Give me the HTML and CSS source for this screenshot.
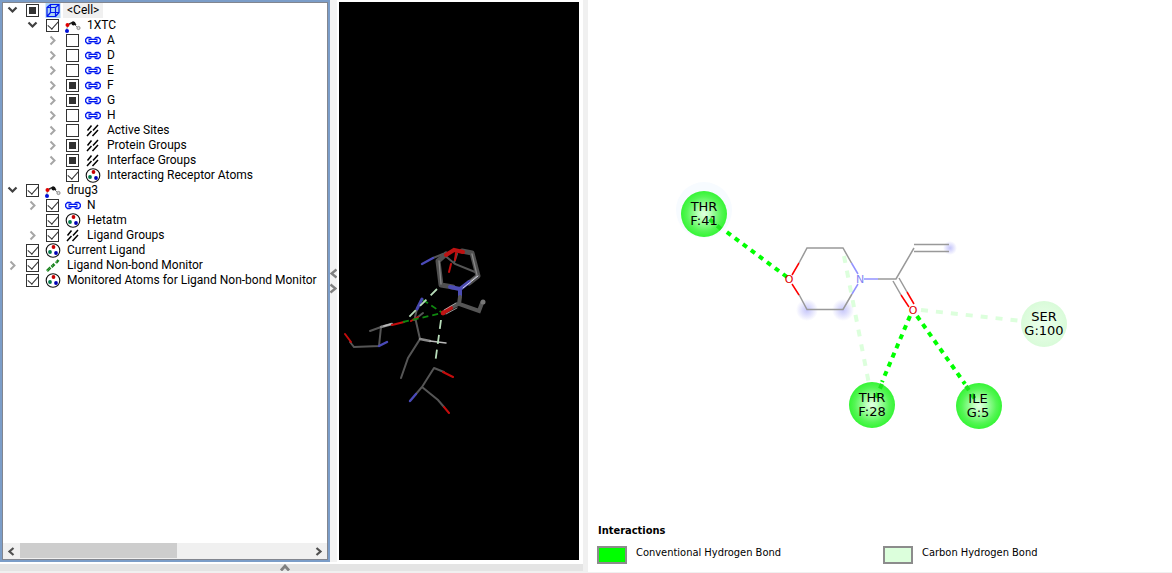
FILE: index.html
```html
<!DOCTYPE html>
<html lang="en">
<head>
<meta charset="utf-8">
<title>Ligand Interactions</title>
<link rel="stylesheet" href="styles.css">
</head>
<body>
<svg class="defs" aria-hidden="true">
  <symbol id="open" viewBox="0 0 15 15"><path d="M3.500 4.500l4 4 4-4" fill="none" stroke="#404040" stroke-width="2.200"/></symbol>
  <symbol id="closed" viewBox="0 0 15 15"><path d="M5.500 3.500l4 4-4 4" fill="none" stroke="#a6a6a6" stroke-width="2"/></symbol>
  <symbol id="cell" viewBox="0 0 15 15"><rect width="15" height="15" fill="#add3f3"/><path d="M1.500 4.500h8.500v9h-8.500zM5 1.500h8.500v8h-8.500zM1.500 4.500l3.500-3M10 4.500l3.500-3M10 13.500l3.500-4M1.500 13.500l3.500-4" fill="none" stroke="#0018f0" stroke-width="1.200"/></symbol>
  <symbol id="molecule" viewBox="0 0 16 15"><path d="M1.500 12l1.500-5 5-2 5 5" fill="none" stroke="#888" stroke-width="1"/><path d="M4 6l4-2 3 3" fill="none" stroke="#222" stroke-width="1.300"/><circle cx="2.500" cy="7" r="2" fill="#e00000"/><circle cx="8.500" cy="5.500" r="2" fill="#111"/><circle cx="2" cy="13" r="2" fill="#0010d8"/><circle cx="13.500" cy="10" r="1.600" fill="#ddd" stroke="#777" stroke-width=".8"/></symbol>
  <symbol id="chain" viewBox="0 0 16 15"><path d="M6.500 5.500L5 4.500H2.500L.700 6.300v2.400l1.800 1.800H5l1.500-1M9.500 5.500l1.500-1h2.500l1.800 1.800v2.400l-1.800 1.800H11l-1.500-1" fill="none" stroke="#0018f0" stroke-width="1.300"/><path d="M3.500 7.500h9" stroke="#0018f0" stroke-width="3.600"/><path d="M4.500 7.500h7" stroke="#fff" stroke-width="1"/></symbol>
  <symbol id="group" viewBox="0 0 15 15"><path d="M2 7.500l4-5M7.500 7.500l5-5.500M1.500 13l4.500-5M7 13l5.500-6" stroke="#000" stroke-width="1.500"/></symbol>
  <symbol id="atoms" viewBox="0 0 15 15"><circle cx="7.500" cy="7.500" r="6.800" fill="#fff" stroke="#111" stroke-width="1.100"/><circle cx="8" cy="4" r="1.900" fill="#c80000"/><circle cx="4.500" cy="9" r="1.900" fill="#007848"/><circle cx="10.500" cy="10" r="1.900" fill="#0000b8"/></symbol>
  <symbol id="monitor" viewBox="0 0 15 15"><path d="M1.500 13l3.500-3.500M6 9l3-3M10.500 5l2.500-3" stroke="#16801a" stroke-width="2.600"/><path d="M2 12.500l11-10.500" stroke="#e8ffe8" stroke-width=".7" stroke-dasharray="1 2"/></symbol>
  <symbol id="tick" viewBox="0 0 13 13"><path d="M2.500 6.500l3 3 5.500-6" fill="none" stroke="#333" stroke-width="1.300"/></symbol>
</svg>
<main class="workspace">
  <div class="left">
    <div class="views">
      <section class="browser" aria-label="Hierarchy">
        <ul class="tree">
          <li class="row"><button class="toggle" aria-label="Collapse Cell"><svg><use href="#open"/></svg></button><input type="checkbox" class="mixed" id="n0"><svg class="icon"><use href="#cell"/></svg><label class="selected" for="n0">&lt;Cell&gt;</label></li>
          <li class="row l1"><button class="toggle" aria-label="Collapse 1XTC"><svg><use href="#open"/></svg></button><input type="checkbox" checked id="n1"><svg class="icon"><use href="#molecule"/></svg><label for="n1">1XTC</label></li>
          <li class="row l2"><button class="toggle" aria-label="Expand A"><svg><use href="#closed"/></svg></button><input type="checkbox" id="n2"><svg class="icon"><use href="#chain"/></svg><label for="n2">A</label></li>
          <li class="row l2"><button class="toggle" aria-label="Expand D"><svg><use href="#closed"/></svg></button><input type="checkbox" id="n3"><svg class="icon"><use href="#chain"/></svg><label for="n3">D</label></li>
          <li class="row l2"><button class="toggle" aria-label="Expand E"><svg><use href="#closed"/></svg></button><input type="checkbox" id="n4"><svg class="icon"><use href="#chain"/></svg><label for="n4">E</label></li>
          <li class="row l2"><button class="toggle" aria-label="Expand F"><svg><use href="#closed"/></svg></button><input type="checkbox" class="mixed" id="n5"><svg class="icon"><use href="#chain"/></svg><label for="n5">F</label></li>
          <li class="row l2"><button class="toggle" aria-label="Expand G"><svg><use href="#closed"/></svg></button><input type="checkbox" class="mixed" id="n6"><svg class="icon"><use href="#chain"/></svg><label for="n6">G</label></li>
          <li class="row l2"><button class="toggle" aria-label="Expand H"><svg><use href="#closed"/></svg></button><input type="checkbox" id="n7"><svg class="icon"><use href="#chain"/></svg><label for="n7">H</label></li>
          <li class="row l2"><button class="toggle" aria-label="Expand Active Sites"><svg><use href="#closed"/></svg></button><input type="checkbox" id="n8"><svg class="icon"><use href="#group"/></svg><label for="n8">Active Sites</label></li>
          <li class="row l2"><button class="toggle" aria-label="Expand Protein Groups"><svg><use href="#closed"/></svg></button><input type="checkbox" class="mixed" id="n9"><svg class="icon"><use href="#group"/></svg><label for="n9">Protein Groups</label></li>
          <li class="row l2"><button class="toggle" aria-label="Expand Interface Groups"><svg><use href="#closed"/></svg></button><input type="checkbox" class="mixed" id="n10"><svg class="icon"><use href="#group"/></svg><label for="n10">Interface Groups</label></li>
          <li class="row l2"><span class="toggle"></span><input type="checkbox" checked id="n11"><svg class="icon"><use href="#atoms"/></svg><label for="n11">Interacting Receptor Atoms</label></li>
          <li class="row"><button class="toggle" aria-label="Collapse drug3"><svg><use href="#open"/></svg></button><input type="checkbox" checked id="n12"><svg class="icon"><use href="#molecule"/></svg><label for="n12">drug3</label></li>
          <li class="row l1"><button class="toggle" aria-label="Expand N"><svg><use href="#closed"/></svg></button><input type="checkbox" checked id="n13"><svg class="icon"><use href="#chain"/></svg><label for="n13">N</label></li>
          <li class="row l1"><span class="toggle"></span><input type="checkbox" checked id="n14"><svg class="icon"><use href="#atoms"/></svg><label for="n14">Hetatm</label></li>
          <li class="row l1"><button class="toggle" aria-label="Expand Ligand Groups"><svg><use href="#closed"/></svg></button><input type="checkbox" checked id="n15"><svg class="icon"><use href="#group"/></svg><label for="n15">Ligand Groups</label></li>
          <li class="row"><span class="toggle"></span><input type="checkbox" checked id="n16"><svg class="icon"><use href="#atoms"/></svg><label for="n16">Current Ligand</label></li>
          <li class="row"><button class="toggle" aria-label="Expand Ligand Non-bond Monitor"><svg><use href="#closed"/></svg></button><input type="checkbox" checked id="n17"><svg class="icon"><use href="#monitor"/></svg><label for="n17">Ligand Non-bond Monitor</label></li>
          <li class="row"><span class="toggle"></span><input type="checkbox" checked id="n18"><svg class="icon"><use href="#atoms"/></svg><label for="n18">Monitored Atoms for Ligand Non-bond Monitor</label></li>
        </ul>
        <div class="scrollbar">
          <button aria-label="Scroll left"><svg viewBox="0 0 17 15"><path d="M10.500 4L6.500 7.500l4 3.500" fill="none" stroke="#505050" stroke-width="2.200"/></svg></button>
          <div class="track"><div class="thumb"></div></div>
          <button aria-label="Scroll right"><svg viewBox="0 0 17 15"><path d="M6.500 4l4 3.500-4 3.500" fill="none" stroke="#505050" stroke-width="2.200"/></svg></button>
        </div>
      </section>
      <div class="splitter">
        <button aria-label="Collapse left"><svg viewBox="0 0 7 15"><path d="M6.500 3.500L1.500 7.500l5 4" fill="none" stroke="#808080" stroke-width="2.400"/></svg></button>
        <button aria-label="Expand right"><svg viewBox="0 0 7 15"><path d="M.5 3.500l5 4-5 4" fill="none" stroke="#808080" stroke-width="2.400"/></svg></button>
      </div>
      <section class="viewer" aria-label="3D view">
        <svg viewBox="339 2 240 558" preserveAspectRatio="xMidYMid meet" fill="none" stroke-linecap="round">
          <g stroke="#555" stroke-width="2">
            <path d="M433 258l10-4 12 10 20 8M457 254l-3 9"/>
            <path d="M417 309l-2 8 5 22-12 19-7 20"/>
            <path d="M370 331l11-4-2 19-25 1-4-5M434 368l-12 19-6 7M422 387l16 13 6 7M434 368l10 4"/>
            <path d="M414 320l9-7"/>
          </g>
          <path d="M420 339l10 2M381 327l11-3" stroke="#888" stroke-width="2.400"/>
          <path d="M430 341l16 2M384 326l7-2" stroke="#bbb" stroke-width="1.500"/>
          <path d="M422 264l11-6M416 394l-6 7M379 346l8-4" stroke="#4a4ab8" stroke-width="2.400"/>
          <path d="M422 299l-5 10" stroke="#4848b0" stroke-width="3"/>
          <path d="M456 253l-1 7M451 264l-2 8M411 321l7-4M392 325l12-3M345 334l6 8M443 372l10 5M444 407l5 6" stroke="#c40c0c" stroke-width="2"/>
          <path d="M446 254l-8 7 3 24 12 2M462 251l10 2 6 23-9 7" stroke="#505050" stroke-width="5" stroke-linejoin="round"/>
          <path d="M439 261l2 23M472 254l5 21M477 276l-8 6" stroke="#888" stroke-width="1.300"/>
          <path d="M446 255l8-5 9 2" stroke="#bc1212" stroke-width="4"/>
          <path d="M450 287l10 2 9-7M460 289v7" stroke="#4c4cb4" stroke-width="4"/>
          <path d="M463 288l15-12" stroke="#d8d8e8" stroke-width="1"/>
          <path d="M460 297l-1 7 20 7 3-8M458 304l-7 4" stroke="#555" stroke-width="4"/>
          <path d="M451 308l-8 5" stroke="#bc1212" stroke-width="4"/><path d="M444 310l12-7M446 314l11-6" stroke="#bbb" stroke-width=".8"/>
          <circle cx="483" cy="302" r="2.500" fill="#777"/><circle cx="443" cy="313" r="2.400" fill="#c01414"/>
          <g stroke="#0f880f" stroke-width="1.800" stroke-dasharray="6 4" stroke-linecap="butt"><path d="M423 300l18 12M403 322l39-9"/></g>
          <path d="M437 289l-31 31M441 320l-6 44" stroke="#b7dcb9" stroke-width="1.800" stroke-dasharray="9 6" stroke-linecap="butt"/>
        </svg>
      </section>
    </div>
    <div class="drawer"><button aria-label="Open panel"><svg viewBox="0 0 12 7"><path d="M2 6.500l4-4.500 4 4.500" fill="none" stroke="#808080" stroke-width="2.800"/></svg></button></div>
  </div>
  <section class="right" aria-label="2D diagram">
    <svg class="diagram" viewBox="588 0 584 520" preserveAspectRatio="xMidYMid meet">
      <defs>
        <radialGradient id="green"><stop offset="0" stop-color="#e2ffe2"/><stop offset=".2" stop-color="#c4ffc4"/><stop offset=".75" stop-color="#55f655"/><stop offset="1" stop-color="#35f535"/></radialGradient>
        <radialGradient id="pale"><stop offset="0" stop-color="#ecffec"/><stop offset="1" stop-color="#d9fbd9"/></radialGradient>
        <radialGradient id="glow"><stop offset="0" stop-color="#c6c6fa"/><stop offset=".4" stop-color="#dcdcfc"/><stop offset="1" stop-color="#fff"/></radialGradient>
      </defs>
      <circle cx="704" cy="210" r="28" fill="#f7fbff"/>
      <g fill="url(#glow)"><circle cx="807" cy="310" r="11"/><circle cx="843" cy="310" r="11"/><circle cx="950" cy="248" r="7"/></g>
      <g fill="url(#green)"><circle cx="704" cy="214" r="23"/><circle cx="872" cy="405" r="23"/><circle cx="979" cy="406" r="23"/></g>
      <circle cx="1044" cy="324" r="23" fill="url(#pale)"/>
      <g stroke="#dcffdc" stroke-width="4" stroke-dasharray="7 8"><path d="M844 256L869 384"/><path d="M921 310L1022 321"/></g>
      <g stroke="#0f0" stroke-width="4" stroke-dasharray="5 5"><path d="M787 277L724 230"/><path d="M910 316L882 382"/><path d="M917 316L965 384"/></g>
      <g stroke="#1de61d" stroke-width="4" stroke-dasharray="5 5"><path d="M721 229L707 217M882 384L874 402M966 386L977 402"/></g>
      <g fill="none" stroke="#999" stroke-width="1.500">
        <path d="M799 263l8-15h36l8.500 15M852 294l-9 15.500h-36l-8-15"/>
        <path d="M878 279h18l18-31M914 244.500h35M914 251.500h35M893 281l8 14M899 278l8 14"/>
      </g>
      <path d="M799 263l-7 12M792 284l7 11M901 295l8 12M907 292l7 12" stroke="#f00" stroke-width="1.500"/>
      <path d="M851.500 263l6.500 11M852 294l6-10M864 279h14" stroke="#9292ff" stroke-width="1.500"/>
      <g class="element"><text x="789" y="283" fill="#e00000">O</text><text x="913" y="314" fill="#e00000">O</text><text x="860" y="283" fill="#8585f2">N</text></g>
      <g class="residue">
        <text x="704" y="211">THR</text><text x="704" y="225">F:41</text>
        <text x="1044" y="321">SER</text><text x="1044" y="335">G:100</text>
        <text x="872" y="402">THR</text><text x="872" y="416">F:28</text>
        <text x="978" y="403">ILE</text><text x="978" y="417">G:5</text>
      </g>
    </svg>
    <div class="legend">
      <h2>Interactions</h2>
      <ul>
        <li><span class="swatch conventional"></span>Conventional Hydrogen Bond</li>
        <li><span class="swatch carbon"></span>Carbon Hydrogen Bond</li>
      </ul>
    </div>
  </section>
</main>
</body>
</html>
```
FILE: styles.css
```css
* { box-sizing: border-box; }
body { margin: 0; font-family: Roboto, "Open Sans", sans-serif; font-size: 12px; color: #000; background: #fff; }
button { border: 0; padding: 0; background: none; display: flex; align-items: center; justify-content: center; }
ul { list-style: none; margin: 0; padding: 0; }
svg { display: block; }
.defs { position: absolute; width: 0; height: 0; }
.workspace { display: flex; height: 100vh; }
.left { flex: 583 1 0; min-width: 0; display: flex; flex-direction: column; }
.views { flex: 1; min-height: 0; display: flex; margin-bottom: 2px; }
.browser { flex: 326 1 0; min-width: 0; display: flex; flex-direction: column; border: 2px solid #7b9dc8; }
.tree { flex: 1; min-height: 0; overflow: hidden; border: 1px solid #82868f; border-bottom: 0; padding-left: 2px; }
.row { display: flex; align-items: center; height: 15px; white-space: nowrap; }
.l1 { padding-left: 20px; }
.l2 { padding-left: 40px; }
.toggle { flex: none; width: 15px; height: 15px; margin-right: 6px; }
.toggle svg { width: 15px; height: 15px; }
.row input { appearance: none; flex: none; width: 13px; height: 13px; margin: 0 6px 0 0; border: 1px solid #333; background: #fff; display: grid; place-items: center; }
.row input:checked::after { content: ""; width: 9px; height: 5px; border: solid #333; border-width: 0 0 1px 1px; transform: translateY(-2px) rotate(-48deg); }
.row input.mixed::after { content: ""; width: 7px; height: 7px; background: #333; }
.icon { flex: none; width: 16px; height: 15px; margin-right: 6px; }
.row label { line-height: 15px; }
.row .selected { background: #f0f0f0; margin-left: -4px; padding: 0 4px; }
.scrollbar { flex: none; display: flex; height: 17px; background: #f0f0f0; border: 1px solid #82868f; border-top: 0; }
.scrollbar button { width: 17px; height: 16px; }
.scrollbar svg { width: 17px; height: 15px; }
.track { flex: 1; }
.thumb { width: 54%; height: 15px; background: #cdcdcd; }
.splitter { flex: none; width: 7px; margin-right: 2px; background: #f3f3f3; display: flex; flex-direction: column; justify-content: center; }
.splitter svg { width: 7px; height: 15px; }
.viewer { flex: 240 1 0; min-width: 0; margin: 2px 4px 2px 0; background: #000; }
.viewer svg { width: 100%; height: 100%; }
.drawer { flex: none; height: 9px; background: #e4e4e4; border-bottom: 2px solid #f0f0f0; display: flex; justify-content: center; }
.drawer svg { width: 12px; height: 7px; }
.drawer button { margin-right: 14px; }
.right { flex: 584 1 0; min-width: 0; display: flex; flex-direction: column; border-left: 5px solid #f0f0f0; border-bottom: 1px solid #f0f0f0; }
.diagram { flex: 1; min-height: 0; width: 100%; }
.residue { font: 13px "DejaVu Sans", sans-serif; text-anchor: middle; }
.element { font: 11px "DejaVu Sans", sans-serif; text-anchor: middle; }
.legend { flex: none; padding: 4px 9px 8px; font: 11px/14px "DejaVu Sans Condensed", "DejaVu Sans", sans-serif; }
.legend h2 { margin: 0 0 8px; padding-left: 1px; font-size: 11px; line-height: 14px; }
.legend ul { display: grid; grid-template-columns: 1fr 1fr; column-gap: 6px; }
.legend li { display: flex; gap: 9px; }
.swatch { width: 30px; height: 18px; border: 2px solid #8c8c8c; }
.conventional { background: #0f0; }
.carbon { background: #dcffdc; }
```
